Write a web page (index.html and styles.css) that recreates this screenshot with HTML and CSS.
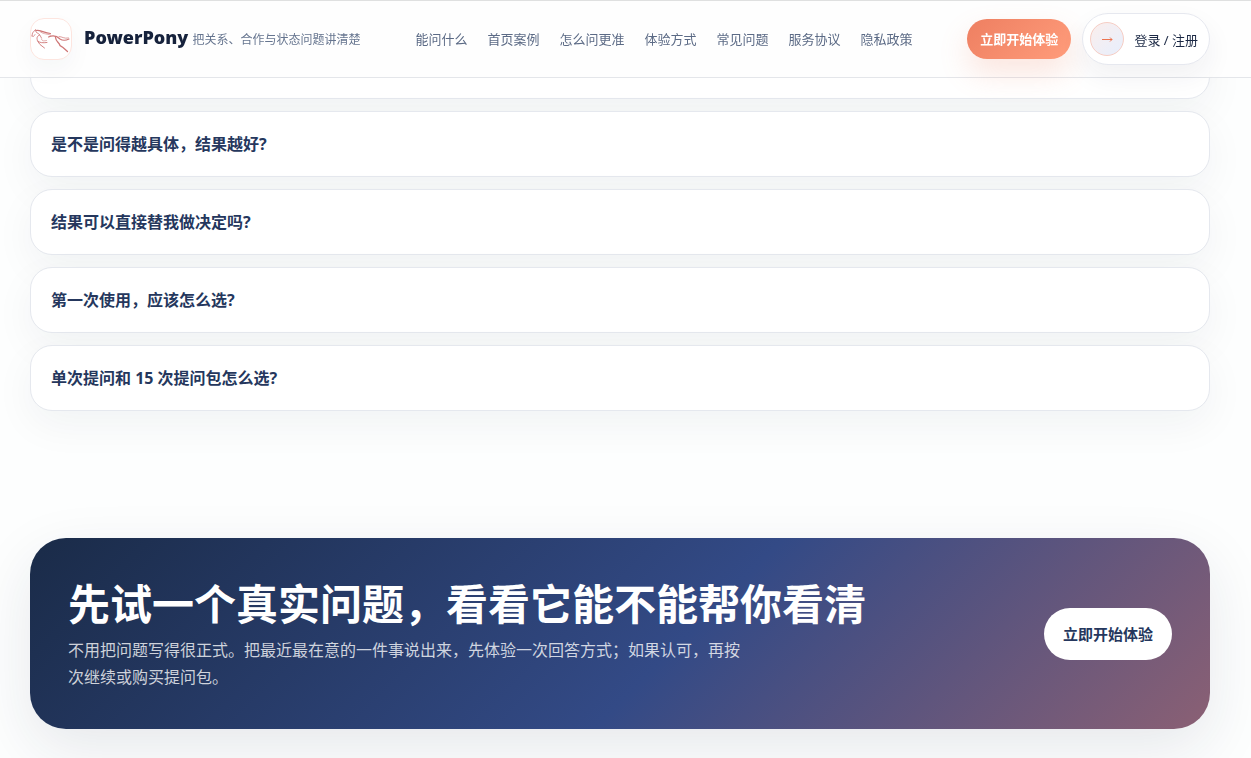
FILE: index.html
```html
<!DOCTYPE html>
<html lang="zh-CN">
<head>
    <meta charset="UTF-8">
    <meta name="viewport" content="width=device-width, initial-scale=1.0">
    <title>PowerPony</title>
    <link rel="stylesheet" href="styles.css">
</head>
<body>
    <header class="site-header">
        <a class="brand" href="#">
            <svg class="brand-logo" viewBox="1 1 40 40" fill="none" stroke="#cf7676" stroke-linecap="round" aria-hidden="true">
                <path d="M2 18L2.5 15L5.5 11.500L6 14L9.5 16.5L11.5 20" stroke-width=".8"/>
                <path d="M6 12.5C10 11.500 14 15 20.5 15.500" stroke-width="1.1"/>
                <path d="M10 13.5C13 16 15 15.500 20.500 17" stroke-width=".6"/>
                <path d="M2 18L3.500 18.500L5 16.500" stroke-width=".7"/>
                <path d="M9.500 17C7 18 6.500 20 7.500 22.500C9 25 13 25 17 24.500" stroke-width=".9"/>
                <path d="M7.500 23L10 26.500L14.500 30" stroke-width=".9"/>
                <path d="M11.500 21C12 23.500 14 23 16.500 22.500" stroke-width=".6"/>
                <path d="M18.500 19C23 17 27 18 30 21C33 23 36 22.500 39 21" stroke-width="1.1"/>
                <path d="M29 18.500C32 18.500 34 21 38.500 20" stroke-width=".7"/>
                <path d="M25.500 19.500C26 24 29 24 30 27.500L33 29.500L37.500 33.500" stroke-width="1.3"/>
            </svg>
            <span class="brand-text"><strong>PowerPony</strong> <small>把关系、合作与状态问题讲清楚</small></span>
        </a>
        <nav class="site-nav">
            <a href="#ask">能问什么</a>
            <a href="#cases">首页案例</a>
            <a href="#better">怎么问更准</a>
            <a href="#plans">体验方式</a>
            <a href="#faq">常见问题</a>
            <a href="#terms">服务协议</a>
            <a href="#privacy">隐私政策</a>
        </nav>
        <div class="header-actions">
            <a class="btn-start" href="#start">立即开始体验</a>
            <a class="btn-login" href="#login">
                <span class="login-icon">
                    <svg viewBox="0 0 12 8" width="12" height="8" fill="none" stroke="#ec7350" aria-hidden="true">
                        <path d="M1 4.5H11M9 2.5L11 4.5L9 6.5"/>
                    </svg>
                </span>
                登录 / 注册
            </a>
        </div>
    </header>

    <main class="page">
        <section class="faq-list" id="faq">
            <div class="faq-item"></div>
            <details class="faq-item">
                <summary>是不是问得越具体，结果越好?</summary>
            </details>
            <details class="faq-item">
                <summary>结果可以直接替我做决定吗?</summary>
            </details>
            <details class="faq-item">
                <summary>第一次使用，应该怎么选?</summary>
            </details>
            <details class="faq-item">
                <summary>单次提问和 15 次提问包怎么选?</summary>
            </details>
        </section>

        <section class="cta" id="start">
            <div class="cta-text">
                <h2>先试一个真实问题，看看它能不能帮你看清</h2>
                <p>不用把问题写得很正式。把最近最在意的一件事说出来，先体验一次回答方式；如果认可，再按次继续或购买提问包。</p>
            </div>
            <a class="cta-button" href="#start">立即开始体验</a>
        </section>
    </main>
</body>
</html>
```

FILE: styles.css
```css
* {
    box-sizing: border-box;
}

body {
    margin: 0;
    font-family: "Noto Sans", "Noto Sans CJK SC", sans-serif;
    color: #1b2844;
    background: #fdfefe;
}

a {
    color: inherit;
    text-decoration: none;
}

.site-header {
    position: fixed;
    top: 0;
    left: 0;
    right: 0;
    z-index: 10;
    display: flex;
    align-items: center;
    justify-content: space-between;
    padding: 12px 41px 12px 30px;
    background: rgba(254, 254, 254, 0.88);
    backdrop-filter: blur(16px);
    border-top: 1px solid #dfe0e0;
    border-bottom: 1px solid #e4e6ea;
}

.brand {
    display: flex;
    align-items: center;
    gap: 12px;
    white-space: nowrap;
}

.brand-logo {
    width: 42px;
    height: 42px;
    border: 1px solid #fde5df;
    border-radius: 14px;
    background: #fff;
    box-shadow: 0 10px 24px rgba(27, 40, 68, 0.04);
}

.brand-text {
    line-height: 24px;
    padding-bottom: 2px;
}

.brand-text strong {
    font-size: 18px;
    font-weight: 900;
    color: #16223c;
}

.brand-text small {
    font-size: 12px;
    color: #66758f;
}

.site-nav {
    display: flex;
    gap: 20px;
    padding-bottom: 2px;
    font-size: 13px;
    color: #5b6a85;
    white-space: nowrap;
}

.header-actions {
    display: flex;
    align-items: center;
    gap: 11px;
    font-size: 13px;
    white-space: nowrap;
}

.btn-start {
    padding: 0 13px;
    line-height: 40px;
    border-radius: 20px;
    color: #fff;
    font-weight: 700;
    background: linear-gradient(135deg, #ee7f61, #ff9c7b);
    box-shadow: 0 14px 30px rgba(240, 128, 96, 0.2);
}

.btn-login {
    display: flex;
    align-items: center;
    gap: 10px;
    height: 52px;
    padding: 0 11px 0 7px;
    border: 1px solid #e6e8ef;
    border-radius: 26px;
    background: #fff;
    box-shadow: 0 12px 28px rgba(27, 40, 68, 0.06);
}

.login-icon {
    display: grid;
    place-items: center;
    width: 34px;
    height: 34px;
    border: 1px solid #f6cdc4;
    border-radius: 50%;
    background: linear-gradient(135deg, #fbeeec, #e7effd);
}

.page {
    padding: 33px 41px 29px 30px;
}

.faq-list {
    display: grid;
    gap: 12px;
}

.faq-item {
    min-height: 66px;
    padding: 0 20px;
    border: 1px solid #e5e8ee;
    border-radius: 22px;
    background: #fff;
    box-shadow: 0 14px 40px rgba(27, 40, 68, 0.05);
}

.faq-item summary {
    list-style: none;
    line-height: 64px;
    font-size: 16px;
    font-weight: 700;
    color: #25375d;
    cursor: pointer;
}

.cta {
    display: flex;
    align-items: center;
    justify-content: space-between;
    gap: 24px;
    margin-top: 127px;
    padding: 37px;
    border: 1px solid transparent;
    border-radius: 36px;
    color: #fff;
    background: linear-gradient(135deg, #1a2b48 0%, #334a86 55%, #8b6074 100%) border-box;
    box-shadow: 0 20px 60px rgba(27, 40, 68, 0.1);
}

.cta h2 {
    margin: 0 0 6px;
    font-size: 42px;
    line-height: 55px;
    font-weight: 700;
}

.cta p {
    max-width: 680px;
    margin: 0;
    font-size: 16px;
    line-height: 27px;
    color: rgba(255, 255, 255, 0.78);
}

.cta-button {
    flex-shrink: 0;
    padding: 0 19px;
    line-height: 52px;
    border-radius: 26px;
    background: #fff;
    color: #25375d;
    font-size: 15px;
    font-weight: 700;
}
```
